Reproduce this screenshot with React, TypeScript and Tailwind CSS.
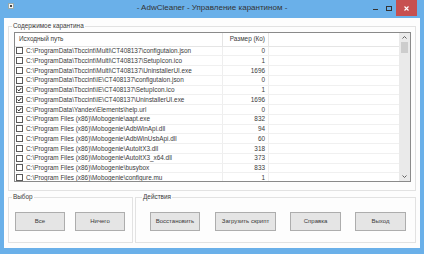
import 'react';

const P1 = 'C:\\ProgramData\\Tbccint\\Multi\\CT408137\\';
const P2 = 'C:\\ProgramData\\Tbccint\\IE\\CT408137\\';
const P3 = 'C:\\Program Files (x86)\\Mobogenie\\';

const ROWS: [string, string, boolean][] = [
  [P1 + 'configutaion.json', '0', false],
  [P1 + 'SetupIcon.ico', '1', false],
  [P1 + 'UninstallerUI.exe', '1696', false],
  [P2 + 'configutaion.json', '0', false],
  [P2 + 'SetupIcon.ico', '1', true],
  [P2 + 'UninstallerUI.exe', '1696', true],
  ['C:\\ProgramData\\Yandex\\Elements\\help.url', '0', true],
  [P3 + 'aapt.exe', '832', false],
  [P3 + 'AdbWinApi.dll', '94', false],
  [P3 + 'AdbWinUsbApi.dll', '60', false],
  [P3 + 'AutoItX3.dll', '318', false],
  [P3 + 'AutoItX3_x64.dll', '373', false],
  [P3 + 'busybox', '833', false],
  [P3 + 'configure.mu', '1', false],
];

const Check = ({ on }: { on: boolean }) => (
  <div className="w-[7px] h-[7px] border border-[#5a5a5a] bg-white flex items-center justify-center shrink-0">
    {on && (
      <svg width="5" height="5" viewBox="0 0 5 5">
        <path d="M0.6 2.6 L1.9 3.9 L4.4 0.9" stroke="#222" strokeWidth="1" fill="none" />
      </svg>
    )}
  </div>
);

const Btn = ({ label, w = 'w-[50px]', className = '' }: { label: string; w?: string; className?: string }) => (
  <div
    className={`${w} h-[19px] border border-[#adadad] bg-[#e5e5e5] flex items-center justify-center text-[6px] text-[#3a3a3a] ${className}`}
  >
    {label}
  </div>
);

const App = () => {
  return (
    <div className="w-[424px] h-[254px] bg-[#6ab0e9] flex flex-col font-['Liberation_Sans',Arial,sans-serif] text-[#3a3a3a]">
      {/* title bar */}
      <div className="h-[18px] flex items-start shrink-0">
        <div className="w-[60px] h-[18px] flex items-start pl-[8px] pt-[3px]">
          <div className="w-[6px] h-[6px] bg-[#f4f4f4] border border-[#9aa] flex items-center justify-center">
            <div className="w-[2px] h-[2px] bg-[#444]" />
          </div>
        </div>
        <div className="flex-1 text-center text-[8px] leading-[16px] text-[#333]">
          - AdwCleaner - Управление карантином -
        </div>
        <div className="w-[60px] h-[18px] flex items-start justify-end pr-[7px]">
          <div className="w-[14px] h-[16px] flex items-center justify-center">
            <div className="w-[5px] h-[1px] bg-[#333] mt-[3px]" />
          </div>
          <div className="w-[14px] h-[16px] flex items-center justify-center">
            <div className="w-[6px] h-[5px] border border-[#333]" />
          </div>
          <div className="w-[21px] h-[16px] bg-[#c75050] flex items-center justify-center">
            <svg width="5" height="5" viewBox="0 0 5 5">
              <path d="M0.5 0.5 L4.5 4.5 M4.5 0.5 L0.5 4.5" stroke="#fff" strokeWidth="1.1" />
            </svg>
          </div>
        </div>
      </div>

      {/* client area */}
      <div className="flex-1 mx-[4px] mb-[6px] bg-[#fdfdfd] flex flex-col px-[4px] pt-[8px] text-[6.4px]">
        {/* Содержимое карантина */}
        <div className="relative h-[165px] border border-[#e2e2e2] pl-[5px] pr-[4px] pt-[5px]">
          <span className="absolute -top-[5px] left-[3px] bg-[#fdfdfd] px-[1px] leading-[8px]">Содержимое карантина</span>
          <div className="h-[150px] border border-[#8a8a8a] bg-white flex overflow-hidden">
            <div className="flex-1 flex flex-col overflow-hidden">
              <div className="h-[13.5px] shrink-0 flex border-b border-[#e5e5e5]">
                <div className="w-[208px] border-r border-[#e5e5e5] pl-[4px] flex items-center">Исходный путь</div>
                <div className="w-[46px] border-r border-[#e5e5e5] pr-[3px] flex items-center justify-end">Размер (Ко)</div>
              </div>
              {ROWS.map(([path, size, on], i) => (
                <div key={i} className="h-[9.75px] shrink-0 flex border-b border-[#f0f0f0]">
                  <div className="w-[208px] border-r border-[#eeeeee] pl-[1px] flex items-center gap-[3px] whitespace-nowrap overflow-hidden">
                    <Check on={on} />
                    <span>{path}</span>
                  </div>
                  <div className="w-[46px] border-r border-[#eeeeee] pr-[3px] flex items-center justify-end">{size}</div>
                </div>
              ))}
            </div>
            {/* scrollbar */}
            <div className="w-[11px] bg-[#eaeaea] flex flex-col items-center shrink-0">
              <div className="h-[9px] w-full flex items-center justify-center">
                <svg width="5" height="3" viewBox="0 0 5 3">
                  <path d="M0.5 2.5 L2.5 0.5 L4.5 2.5" stroke="#606060" strokeWidth="1" fill="none" />
                </svg>
              </div>
              <div className="w-[7px] h-[11px] bg-[#cdcdcd]" />
              <div className="flex-1" />
              <div className="h-[9px] w-full flex items-center justify-center">
                <svg width="5" height="3" viewBox="0 0 5 3">
                  <path d="M0.5 0.5 L2.5 2.5 L4.5 0.5" stroke="#606060" strokeWidth="1" fill="none" />
                </svg>
              </div>
            </div>
          </div>
        </div>

        {/* bottom groups */}
        <div className="flex gap-[2px] mt-[6px]">
          <div className="relative w-[125px] h-[46px] border border-[#e2e2e2] flex pl-[6px] pt-[14px]">
            <span className="absolute -top-[5px] left-[3px] bg-[#fdfdfd] px-[1px] leading-[8px]">Выбор</span>
            <Btn label="Все" />
            <Btn label="Ничего" className="ml-[10px]" />
          </div>
          <div className="relative flex-1 h-[46px] border border-[#e2e2e2] flex pl-[14px] pt-[14px]">
            <span className="absolute -top-[5px] left-[6px] bg-[#fdfdfd] px-[1px] leading-[8px]">Действия</span>
            <Btn label="Восстановить" />
            <Btn label="Загрузить скрипт" w="w-[61px]" className="ml-[15px]" />
            <Btn label="Справка" w="w-[51px]" className="ml-[14px]" />
            <Btn label="Выход" w="w-[51px]" className="ml-[14px]" />
          </div>
        </div>
      </div>
    </div>
  );
};

export default App;
